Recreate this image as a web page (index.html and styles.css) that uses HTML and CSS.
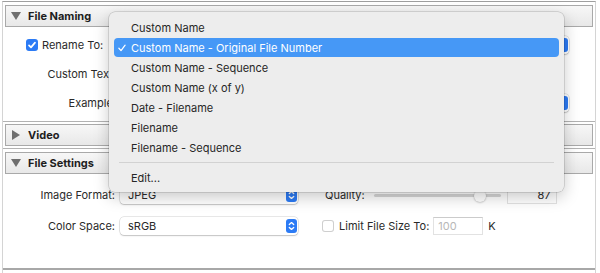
FILE: index.html
```html
<!DOCTYPE html>
<html lang="en">
<head>
  <meta charset="UTF-8" />
  <title>Export | File Settings</title>
  <link rel="stylesheet" href="styles.css">
</head>
<body>
  <div class="panel">
    <section class="group">
      <div class="head"><span class="tri"><span class="down"></span></span>File Naming</div>
      <div class="body naming">
        <div class="row">
          <div class="lead">
            <span class="check on"><svg viewBox="0 0 12 12"><path d="M3 6.3l2 2.1 4-4.8" fill="none" stroke="#fff" stroke-width="1.7" stroke-linecap="round" stroke-linejoin="round"/></svg></span>
            <span>Rename To:</span>
          </div>
          <div class="select grow"><span class="stepper"></span></div>
        </div>
        <div class="row">
          <span class="lbl">Custom Text:</span>
          <div class="field wide"></div>
        </div>
        <div class="row">
          <span class="lbl">Example:</span>
          <span class="grow"></span>
          <div class="select small"><span class="stepper"></span></div>
        </div>
      </div>
    </section>

    <section class="group">
      <div class="head"><span class="tri"><span class="right"></span></span>Video</div>
      <div class="body closed"></div>
    </section>

    <section class="group">
      <div class="head"><span class="tri"><span class="down"></span></span>File Settings</div>
      <div class="body settings">
        <div class="row">
          <span class="lbl">Image Format:</span>
          <div class="select fmt"><span>JPEG</span><span class="stepper"><svg viewBox="0 0 11 14"><path d="M3.3 5.6L5.5 3.6 7.7 5.6M3.3 8.4L5.5 10.4 7.7 8.4" fill="none" stroke="#fff" stroke-width="1.3" stroke-linecap="round" stroke-linejoin="round"/></svg></span></div>
          <div class="side">
            <span class="quality">Quality:</span>
            <div class="slider"><span class="track"></span><span class="thumb"></span></div>
            <div class="field num">87</div>
          </div>
        </div>
        <div class="row">
          <span class="lbl">Color Space:</span>
          <div class="select fmt"><span>sRGB</span><span class="stepper"><svg viewBox="0 0 11 14"><path d="M3.3 5.6L5.5 3.6 7.7 5.6M3.3 8.4L5.5 10.4 7.7 8.4" fill="none" stroke="#fff" stroke-width="1.3" stroke-linecap="round" stroke-linejoin="round"/></svg></span></div>
          <div class="side">
            <span class="check"></span>
            <span class="limit">Limit File Size To:</span>
            <div class="field size">100</div>
            <span class="unit">K</span>
          </div>
        </div>
      </div>
    </section>

    <div class="menu">
      <div class="item"><span class="ck"></span>Custom Name</div>
      <div class="item active"><span class="ck"><svg viewBox="0 0 9 9"><path d="M1 4.8l2.4 2.6L8 1.3" fill="none" stroke="#fff" stroke-width="1.4" stroke-linecap="round" stroke-linejoin="round"/></svg></span>Custom Name - Original File Number</div>
      <div class="item"><span class="ck"></span>Custom Name - Sequence</div>
      <div class="item"><span class="ck"></span>Custom Name (x of y)</div>
      <div class="item"><span class="ck"></span>Date - Filename</div>
      <div class="item"><span class="ck"></span>Filename</div>
      <div class="item"><span class="ck"></span>Filename - Sequence</div>
      <div class="divider"></div>
      <div class="item"><span class="ck"></span>Edit...</div>
    </div>
  </div>
</body>
</html>
```

FILE: styles.css
```css
* {
  box-sizing: border-box;
}

body {
  margin: 0;
  padding-top: 1px;
  height: 273px;
  overflow: hidden;
  background: #fff;
  font-family: 'Inter', 'Liberation Sans', sans-serif;
  font-size: 11px;
  color: #2a2a2a;
}

.panel {
  position: relative;
  margin: 0 4px 0 2px;
  height: 272px;
  border-top: 1px solid #9f9f9f;
  border-left: 1px solid #d4d4d4;
  border-right: 1px solid #d4d4d4;
}

.group {
  border-bottom: 1px solid #b2b2b2;
}

.group:last-of-type {
  border-bottom: 2px solid #a8a8a8;
}

.head {
  display: flex;
  align-items: center;
  height: 22px;
  margin: 3px 2px 0;
  padding-left: 5px;
  border: 1px solid #a9a9a9;
  background: linear-gradient(#f7f7f7, #e8e8e8);
  font-weight: 700;
  color: #1e1e1e;
}

.group:nth-child(2) .head {
  margin-top: 2px;
}

.tri {
  display: flex;
  justify-content: center;
  width: 10px;
  margin-right: 7px;
}

.down {
  border-left: 5px solid transparent;
  border-right: 5px solid transparent;
  border-top: 8px solid #6f6f6f;
}

.right {
  border-top: 5px solid transparent;
  border-bottom: 5px solid transparent;
  border-left: 8px solid #6f6f6f;
}

.body {
  display: flex;
  flex-direction: column;
  height: 94px;
}

.body.closed {
  height: 2px;
}

.naming {
  padding-top: 9px;
  gap: 11px;
}

.settings {
  padding-top: 12px;
  gap: 13px;
}

.row {
  display: flex;
  align-items: center;
  height: 18px;
}

.lead {
  display: flex;
  align-items: center;
  gap: 4px;
  width: 113px;
  padding-left: 23px;
}

.lbl {
  width: 113px;
  text-align: right;
}

.settings .lbl {
  width: 112px;
}

.grow {
  flex: 1;
}

.check {
  display: flex;
  width: 12px;
  height: 12px;
  border-radius: 3px;
  background: #fff;
  box-shadow: 0 0 0 1px #cfcfcf inset;
}

.check.on {
  background: #2c7bf5;
  box-shadow: none;
}

.select {
  display: flex;
  align-items: center;
  height: 18px;
  margin-left: 5px;
  padding: 0 1px 0 8px;
  border-radius: 4px;
  background: #fff;
  box-shadow: 0 0 0 0.5px rgba(0, 0, 0, 0.18), 0 1px 1.5px rgba(0, 0, 0, 0.16);
}

.select.grow {
  margin-right: 26px;
}

.select.small {
  width: 100px;
  margin-right: 26px;
}

.select.fmt {
  width: 178px;
}

.stepper {
  display: flex;
  width: 11px;
  height: 14px;
  margin-left: auto;
  border-radius: 3px;
  background: #2c7bf5;
}

.field {
  height: 18px;
  margin-left: 5px;
  border: 1px solid #e2e2e2;
  border-top-color: #cbcbcb;
  background: #fff;
}

.field.wide {
  width: 200px;
}

.side {
  display: flex;
  align-items: center;
  margin-left: 24px;
}

.quality {
  margin-left: 3px;
}

.slider {
  position: relative;
  display: flex;
  align-items: center;
  width: 127px;
  height: 18px;
  margin-left: 9px;
}

.track {
  flex: 1;
  height: 3px;
  border-radius: 2px;
  background: #d7d7d7;
}

.thumb {
  position: absolute;
  left: 100px;
  top: 4px;
  width: 12px;
  height: 12px;
  border-radius: 6px;
  background: #fff;
  box-shadow: 0 0.5px 2px rgba(0, 0, 0, 0.3);
}

.num {
  width: 50px;
  margin-left: 6px;
  padding-right: 5px;
  text-align: right;
  line-height: 16px;
}

.limit {
  margin-left: 5px;
}

.size {
  width: 50px;
  margin-left: 4px;
  padding-left: 4px;
  line-height: 16px;
  color: #b8b8b8;
}

.unit {
  margin-left: 5px;
}

.menu {
  position: absolute;
  left: 106px;
  top: 10px;
  width: 455px;
  height: 180px;
  padding-top: 6px;
  border-radius: 6px;
  background: #ededed;
  box-shadow: 0 0 0 0.5px rgba(0, 0, 0, 0.22), 0 5px 16px rgba(0, 0, 0, 0.22);
  font-size: 11px;
  color: #262626;
}

.item {
  display: flex;
  align-items: center;
  height: 20px;
  margin: 0 5px;
  padding-left: 4px;
  border-radius: 4px;
}

.item.active {
  height: 19px;
  margin-bottom: 1px;
  background: #4698f6;
  color: #fff;
}

.ck {
  display: flex;
  width: 13px;
}

.ck svg {
  width: 8px;
  height: 8px;
}

.divider {
  height: 1px;
  margin: 4px 10px 5px;
  background: #d2d2d2;
}
```
